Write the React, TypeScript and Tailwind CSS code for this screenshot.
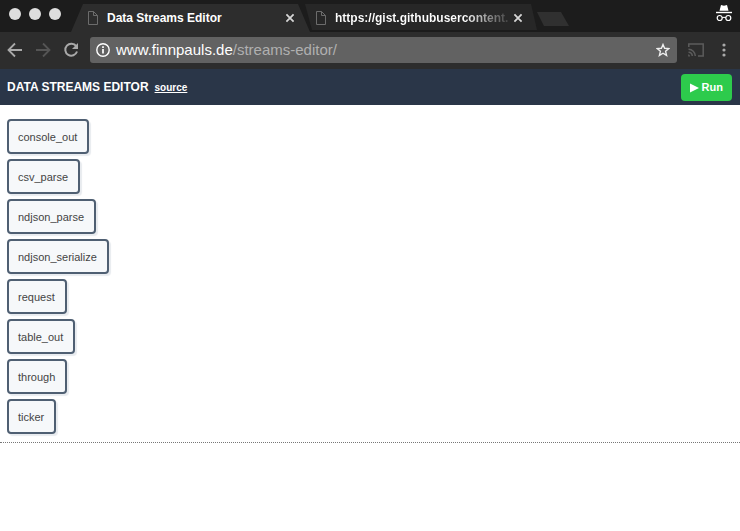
import React from "react";

const nodeTypes = [
  "console_out",
  "csv_parse",
  "ndjson_parse",
  "ndjson_serialize",
  "request",
  "table_out",
  "through",
  "ticker",
];

function PageIcon() {
  return (
    <svg width="10" height="14" viewBox="0 0 10 14" fill="none" stroke="#6c6c6c" className="shrink-0">
      <path d="M.5.5h5l4 4v9h-9zM5.5.5v4h4" />
    </svg>
  );
}

function CloseButton() {
  return (
    <button type="button" aria-label="Close tab" className="shrink-0">
      <svg width="10" height="10" viewBox="0 0 10 10" stroke="#d6d6d6" strokeWidth="1.8">
        <path d="M1.4 1.4l7.200 7.200M8.600 1.400L1.400 8.600" />
      </svg>
    </button>
  );
}

function TabStrip() {
  return (
    <div className="flex h-8 bg-[#1c1c1c]">
      <div className="flex shrink-0 items-center gap-2 pl-[9px] pb-1 pr-[10px]">
        <span className="size-3 rounded-full bg-[#dedede]" />
        <span className="size-3 rounded-full bg-[#dedede]" />
        <span className="size-3 rounded-full bg-[#dedede]" />
      </div>
      <div className="mt-1 flex w-[239px] items-center bg-[#2d2d2d] pl-[17px] pr-[15px] [clip-path:polygon(12px_0,227px_0,100%_100%,0_100%)]">
        <PageIcon />
        <span className="ml-[9px] flex-1 whitespace-nowrap text-[12px] font-bold text-white">Data Streams Editor</span>
        <CloseButton />
      </div>
      <div className="-ml-2 mt-1 mb-[2px] flex w-[235px] items-center bg-[#272727] pl-[14px] pr-[14px] pt-[2px] [clip-path:polygon(3px_0,229px_0,100%_100%,10px_100%)]">
        <PageIcon />
        <span className="ml-[9px] whitespace-nowrap bg-linear-to-r from-white from-75% to-[#444] bg-clip-text text-[12px] font-bold text-transparent">
          https://gist.githubusercontent.
        </span>
        <span className="ml-auto flex">
          <CloseButton />
        </span>
      </div>
      <button
        type="button"
        aria-label="New tab"
        className="mt-3 h-[14px] w-8 bg-[#303030] [clip-path:polygon(0_0,24px_0,100%_100%,7px_100%)]"
      />
      <svg width="18" height="18" viewBox="0 0 18 18" className="ml-auto mr-[7px] mt-1" fill="none" stroke="white">
        <path d="M1 8.500h16" strokeWidth="1.400" />
        <path d="M4.500 6.800L6 1l3 .8L12 1l1.500 5.800z" fill="white" stroke="none" />
        <circle cx="4.700" cy="14" r="2.500" strokeWidth="1.200" />
        <circle cx="13.300" cy="14" r="2.500" strokeWidth="1.200" />
        <path d="M7.200 13.700q1.800-1 3.600 0" strokeWidth="1.100" />
      </svg>
    </div>
  );
}

function Toolbar() {
  return (
    <div className="flex h-[37px] items-center bg-[#2d2d2d] pb-px pl-[7px] pr-[14px]">
      <button type="button" aria-label="Back">
        <svg width="16" height="16" viewBox="0 0 16 16" fill="none" stroke="#a9a9a9" strokeWidth="1.800">
          <path d="M15 8H2M8 1.500L1.500 8 8 14.500" />
        </svg>
      </button>
      <button type="button" aria-label="Forward" className="ml-3">
        <svg width="16" height="16" viewBox="0 0 16 16" fill="none" stroke="#555" strokeWidth="1.800">
          <path d="M1 8h13M8 1.500L14.500 8 8 14.500" />
        </svg>
      </button>
      <button type="button" aria-label="Reload" className="ml-3">
        <svg width="16" height="16" viewBox="0 0 16 16" fill="none" stroke="#a9a9a9" strokeWidth="2">
          <path d="M13.200 4.200A6 6 0 1 0 14 9.500" />
          <path d="M15 1v6H9z" fill="#a9a9a9" stroke="none" />
        </svg>
      </button>
      <div className="ml-[11px] flex h-[26px] min-w-0 flex-1 items-center rounded-[3px] bg-[#626262] pl-[6px] pr-[7px]">
        <svg width="14" height="14" viewBox="0 0 14 14" fill="none" stroke="white" className="shrink-0">
          <circle cx="7" cy="7" r="6.200" strokeWidth="1.400" />
          <path d="M7 6v4.500M7 3.200v1.700" strokeWidth="1.700" />
        </svg>
        <div className="ml-[6px] flex-1 whitespace-nowrap text-[15px] leading-[26px] text-white">
          www.finnpauls.de<span className="text-[#b0b0b0]">/streams-editor/</span>
        </div>
        <button type="button" aria-label="Bookmark">
          <svg width="14" height="14" viewBox="0 0 14 14" fill="none" stroke="#eee" strokeWidth="1.400">
            <path d="M7 1.500l1.600 3.800 4.200.3-3.200 2.700 1 4.100L7 10.200l-3.600 2.200 1-4.100L1.200 5.600l4.200-.3z" />
          </svg>
        </button>
      </div>
      <button type="button" aria-label="Cast" className="ml-[11px]">
        <svg width="16" height="14" viewBox="0 0 16 14" fill="none" stroke="#5c5c5c" strokeWidth="1.500">
          <path d="M.8 4V1h14.400v12H10M.5 6.200A7 7 0 0 1 7.300 13M.5 9.200A4 4 0 0 1 4.300 13" />
          <path d="M.2 11.300A2 2 0 0 1 2 13.500H.2z" fill="#5c5c5c" stroke="none" />
        </svg>
      </button>
      <button type="button" aria-label="Menu" className="ml-[18px]">
        <svg width="4" height="14" viewBox="0 0 4 14" fill="#a9a9a9">
          <circle cx="2" cy="2" r="1.600" />
          <circle cx="2" cy="7" r="1.600" />
          <circle cx="2" cy="12" r="1.600" />
        </svg>
      </button>
    </div>
  );
}

export default function App() {
  return (
    <div className="min-h-screen bg-white font-['Liberation_Sans',Arial,sans-serif]">
      <TabStrip />
      <Toolbar />
      <header className="flex h-9 items-center bg-[#2a3648] pl-[7px] pr-2 text-white">
        <h1 className="text-[12px] font-bold">DATA STREAMS EDITOR</h1>
        <a href="#source" className="ml-[6px] text-[10px] font-bold underline">
          source
        </a>
        <button
          type="button"
          className="ml-auto flex h-[27px] items-center gap-[3px] rounded-[4px] bg-[#2dcb4c] px-[9px] pt-px text-[11px] font-bold"
        >
          <svg width="9" height="10" viewBox="0 0 9 10" fill="white">
            <path d="M0 .5L9 5 0 9.500z" />
          </svg>
          Run
        </button>
      </header>
      <main className="border-b border-dotted border-[#777] px-[7px] pb-2 pt-[14px]">
        <ul className="flex flex-col items-start gap-[5px]">
          {nodeTypes.map((name) => (
            <li key={name}>
              <button
                type="button"
                className="block h-[35px] rounded-[4px] border-2 border-[#4f5f72] bg-[#f6f8fa] pl-[9px] pr-[10px] pt-[2px] text-[11px] text-[#444] shadow-[2px_2px_1px_#e8ebef]"
              >
                {name}
              </button>
            </li>
          ))}
        </ul>
      </main>
    </div>
  );
}
